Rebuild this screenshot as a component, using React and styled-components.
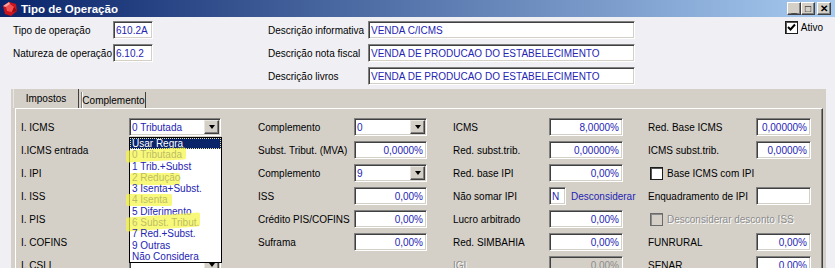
import React from "react";
import styled, { createGlobalStyle } from "styled-components";

const GlobalStyle = createGlobalStyle`
  html, body { margin: 0; padding: 0; }
  body {
    background: #f0f0f4;
    font-family: "Liberation Sans", Arial, sans-serif;
    font-size: 10px;
    color: #000;
    overflow: hidden;
  }
`;

const BLUE = "#2424b4";

const Window = styled.div`
  width: 835px;
  height: 268px;
  overflow: hidden;
  display: flex;
  flex-direction: column;
  background: #f0f0f4;
`;

const TitleBar = styled.div`
  height: 17px;
  flex: none;
  display: flex;
  align-items: center;
  padding: 0 4px 0 2px;
  background: linear-gradient(to right, #0a246a, #a6caf0);
`;

const Title = styled.div`
  color: #fff;
  font-weight: bold;
  font-size: 11.5px;
  margin-left: 3px;
  flex: 1;
`;

const Controls = styled.div`
  display: flex;
  align-items: center;
  button:last-child { margin-left: 2px; }
`;

const CtrlButton = styled.button`
  width: 14px;
  height: 13px;
  padding: 0;
  margin: 0;
  background: #d4d0c8;
  border: 1px solid;
  border-color: #fff #404040 #404040 #fff;
  box-shadow: inset -1px -1px 0 #808080;
  font: bold 10px "Liberation Sans", Arial, sans-serif;
  line-height: 9px;
  color: #000;
  display: flex;
  align-items: center;
  justify-content: center;
`;

const Header = styled.div`
  display: flex;
  padding: 4px 12px 4px 13px;
  flex: none;
`;

const FormGrid = styled.div`
  display: grid;
  grid-template-columns: ${(p) => p.$cols};
  grid-auto-rows: 18px;
  row-gap: 5px;
  margin-left: ${(p) => p.$offset || 0}px;
`;

const Label = styled.div`
  display: flex;
  align-items: center;
  white-space: nowrap;
  padding-left: ${(p) => p.$indent || 0}px;
  color: ${(p) => (p.$disabled ? "#8c8c8c" : "#000")};
  text-shadow: ${(p) => (p.$disabled ? "1px 1px 0 #fff" : "none")};
`;

const Field = styled.div`
  box-sizing: border-box;
  flex: none;
  width: ${(p) => (p.$w ? p.$w + "px" : "100%")};
  height: 18px;
  background: ${(p) => (p.$disabled ? "#d4d0c8" : "#fff")};
  border: 1px solid;
  border-color: #808080 #fff #fff #808080;
  box-shadow: inset 1px 1px 0 #404040, inset -1px -1px 0 #d4d0c8;
  color: ${(p) => (p.$disabled ? "#8c8c8c" : BLUE)};
  display: flex;
  align-items: center;
  justify-content: ${(p) => (p.$right ? "flex-end" : "flex-start")};
  padding: 0 3px 0 2px;
  white-space: nowrap;
  overflow: hidden;
`;

const Ativo = styled.div`
  margin-left: auto;
  align-self: flex-start;
  display: flex;
  align-items: center;
  gap: 3px;
  height: 13px;
`;

const Box = styled.span`
  box-sizing: border-box;
  width: 13px;
  height: 13px;
  flex: none;
  background: ${(p) => (p.$disabled ? "#d4d0c8" : "#fff")};
  border: 1px solid ${(p) => (p.$disabled ? "#6a6a6a" : "#1c1c1c")};
  box-shadow: inset 1px 1px 0 ${(p) => (p.$disabled ? "#8a8a8a" : "#555")};
  display: flex;
  align-items: center;
  justify-content: center;
`;

const CheckRow = styled.div`
  grid-column: span 2;
  display: flex;
  align-items: center;
  gap: 4px;
  padding-left: ${(p) => p.$indent || 0}px;
  color: ${(p) => (p.$disabled ? "#8c8c8c" : "#000")};
  text-shadow: ${(p) => (p.$disabled ? "1px 1px 0 #fff" : "none")};
  white-space: nowrap;
`;

const TabArea = styled.div`
  margin-left: 11px;
  width: 815px;
  flex: 1;
  background: #d4d0c8;
  display: flex;
  flex-direction: column;
`;

const TabStrip = styled.div`
  height: 19px;
  display: flex;
  align-items: flex-end;
  padding-left: 2px;
  gap: 2px;
  flex: none;
`;

const Tab = styled.div`
  box-sizing: border-box;
  width: ${(p) => p.$w}px;
  height: ${(p) => (p.$active ? 19 : 16)}px;
  display: flex;
  align-items: center;
  justify-content: center;
  background: #d4d0c8;
  border-left: 1px solid ${(p) => (p.$active ? "#e8e6e2" : "#808080")};
  border-right: 1px solid #404040;
  box-shadow: ${(p) => (p.$active ? "none" : "inset 1px 0 0 #fff")};
`;

const Panel = styled.div`
  margin-left: 4px;
  width: 808px;
  flex: 1;
  box-sizing: border-box;
  border-top: 1px solid #fff;
  border-left: 1px solid #fff;
  border-right: 1px solid #404040;
  box-shadow: inset -1px 0 0 #808080;
  padding: 9px 0 0 5px;
`;

const ComboWrap = styled.div`
  position: relative;
  width: ${(p) => (p.$w ? p.$w + "px" : "100%")};
`;

const ComboBox = styled(Field)`
  width: 100%;
  padding-right: 1px;
  justify-content: space-between;
`;

const Arrow = styled.span`
  box-sizing: border-box;
  width: 15px;
  height: 14px;
  flex: none;
  background: #d4d0c8;
  border: 1px solid;
  border-color: #e8e6e2 #404040 #404040 #e8e6e2;
  box-shadow: inset -1px -1px 0 #808080;
  display: flex;
  align-items: center;
  justify-content: center;
  &::after {
    content: "";
    border-left: 3.5px solid transparent;
    border-right: 3.5px solid transparent;
    border-top: 4px solid #000;
  }
`;

const DropList = styled.div`
  position: absolute;
  top: 19px;
  left: 0;
  width: 93px;
  height: 126px;
  box-sizing: border-box;
  background: #fff;
  border: 1px solid #000;
  z-index: 5;
  display: flex;
  flex-direction: column;
`;

const Option = styled.div`
  flex: 1;
  min-height: 0;
  line-height: 11px;
  position: relative;
  display: flex;
  align-items: center;
  padding-left: 2px;
  white-space: nowrap;
  font-size: 10px;
  color: ${(p) => (p.$selected ? "#fff" : BLUE)};
  background: ${(p) => (p.$selected ? "#0a246a" : "transparent")};
  outline: ${(p) => (p.$selected ? "1px dotted #e8e4a0" : "none")};
  outline-offset: -1px;
`;

const Marker = styled.span`
  position: absolute;
  left: ${(p) => p.$left}px;
  width: ${(p) => p.$w}px;
  top: ${(p) => p.$top || 0}px;
  height: ${(p) => p.$h || 12}px;
  background: rgba(245, 245, 70, 0.72);
  transform: skewY(${(p) => p.$skew || 0}deg);
  border-radius: 2px;
`;

const LinkText = styled.span`
  color: ${BLUE};
  margin-left: 5px;
  white-space: nowrap;
`;

const SmallRow = styled.div`
  display: flex;
  align-items: center;
`;

function TitleIcon() {
  return (
    <svg width="16" height="16" viewBox="0 0 16 16">
      <path d="M1 5 L7 1 L14 3 L15 10 L9 15 L3 13 Z" fill="#c8141c" />
      <path d="M4 6 L8 3 L12 6 L10 11 L5 10 Z" fill="#f25050" />
      <path d="M7 1 L8 3 L4 6 L1 5 Z" fill="#ffa0a0" />
      <path d="M12 6 L15 10 L10 11 Z" fill="#98080e" />
    </svg>
  );
}

function Check({ checked, disabled }) {
  return (
    <Box $disabled={disabled}>
      {checked && (
        <svg width="9" height="9" viewBox="0 0 9 9">
          <path d="M1 4 L3.5 6.5 L8 1.5" stroke="#000" strokeWidth="2" fill="none" />
        </svg>
      )}
    </Box>
  );
}

const options = [
  "Usar Regra",
  "0 Tributada",
  "1 Trib.+Subst",
  "2 Redução",
  "3 Isenta+Subst.",
  "4 Isenta",
  "5 Diferimento",
  "6 Subst. Tribut.",
  "7 Red.+Subst.",
  "9 Outras",
  "Não Considera",
];

const markers = {
  "0 Tributada": { left: -4, w: 60, skew: -3 },
  "2 Redução": { left: 0, w: 50, top: 1 },
  "4 Isenta": { left: -4, w: 46 },
  "6 Subst. Tribut.": { left: -4, w: 74, top: -2, h: 14, skew: -4 },
};

function Combo({ value, open, w }) {
  return (
    <ComboWrap $w={w}>
      <ComboBox>
        <span>{value}</span>
        <Arrow />
      </ComboBox>
      {open && (
        <DropList>
          {options.map((o, i) => (
            <Option key={o} $selected={i === 0}>
              {o}
              {markers[o] && (
                <Marker
                  $left={markers[o].left}
                  $w={markers[o].w}
                  $top={markers[o].top}
                  $h={markers[o].h}
                  $skew={markers[o].skew}
                />
              )}
            </Option>
          ))}
        </DropList>
      )}
    </ComboWrap>
  );
}

const gridCols = "108px 92px 133px 73px 122px 74px 133px 55px";

export default function App() {
  return (
    <Window>
      <GlobalStyle />
      <TitleBar>
        <TitleIcon />
        <Title>Tipo de Operação</Title>
        <Controls>
          <CtrlButton>_</CtrlButton>
          <CtrlButton>□</CtrlButton>
          <CtrlButton>✕</CtrlButton>
        </Controls>
      </TitleBar>

      <Header>
        <FormGrid $cols="100px 40px">
          <Label>Tipo de operação</Label>
          <Field>610.2A</Field>
          <Label>Natureza de operação</Label>
          <Field>6.10.2</Field>
        </FormGrid>
        <FormGrid $cols="100px 267px" $offset={115}>
          <Label>Descrição informativa</Label>
          <Field>VENDA C/ICMS</Field>
          <Label>Descrição nota fiscal</Label>
          <Field>VENDA DE PRODUCAO DO ESTABELECIMENTO</Field>
          <Label>Descrição livros</Label>
          <Field>VENDA DE PRODUCAO DO ESTABELECIMENTO</Field>
        </FormGrid>
        <Ativo>
          <Check checked />
          <span>Ativo</span>
        </Ativo>
      </Header>

      <TabArea>
        <TabStrip>
          <Tab $active $w={66}>Impostos</Tab>
          <Tab $w={65}>Complemento</Tab>
        </TabStrip>
        <Panel>
          <FormGrid $cols={gridCols}>
            <Label>I. ICMS</Label>
            <Combo value="0 Tributada" open />
            <Label $indent={37}>Complemento</Label>
            <Combo value="0" />
            <Label $indent={26}>ICMS</Label>
            <Field $right>8,0000%</Field>
            <Label $indent={25}>Red. Base ICMS</Label>
            <Field $right>0,00000%</Field>

            <Label>I.ICMS entrada</Label>
            <Combo value="" />
            <Label $indent={37}>Subst. Tribut. (MVA)</Label>
            <Field $right>0,0000%</Field>
            <Label $indent={26}>Red. subst.trib.</Label>
            <Field $right>0,00000%</Field>
            <Label $indent={25}>ICMS subst.trib.</Label>
            <Field $right>0,0000%</Field>

            <Label>I. IPI</Label>
            <Combo value="" />
            <Label $indent={37}>Complemento</Label>
            <Combo value="9" />
            <Label $indent={26}>Red. base IPI</Label>
            <Field $right>0,00%</Field>
            <CheckRow $indent={27}>
              <Check />
              <span>Base ICMS com IPI</span>
            </CheckRow>

            <Label>I. ISS</Label>
            <Combo value="" />
            <Label $indent={37}>ISS</Label>
            <Field $right>0,00%</Field>
            <Label $indent={26}>Não somar IPI</Label>
            <SmallRow>
              <Field $w={17}>N</Field>
              <LinkText>Desconsiderar</LinkText>
            </SmallRow>
            <Label $indent={25}>Enquadramento de IPI</Label>
            <Field />

            <Label>I. PIS</Label>
            <Combo value="" />
            <Label $indent={37}>Crédito PIS/COFINS</Label>
            <Field $right>0,00%</Field>
            <Label $indent={26}>Lucro arbitrado</Label>
            <Field $right>0,00%</Field>
            <CheckRow $indent={27} $disabled>
              <Check disabled />
              <span>Desconsiderar desconto ISS</span>
            </CheckRow>

            <Label>I. COFINS</Label>
            <Combo value="" />
            <Label $indent={37}>Suframa</Label>
            <Field $right>0,00%</Field>
            <Label $indent={26}>Red. SIMBAHIA</Label>
            <Field $right>0,00%</Field>
            <Label $indent={25}>FUNRURAL</Label>
            <Field $right>0,00%</Field>

            <Label>I. CSLL</Label>
            <Combo value="" />
            <span />
            <span />
            <Label $indent={26} $disabled>IGI</Label>
            <Field $right $disabled>0,00%</Field>
            <Label $indent={25}>SENAR</Label>
            <Field $right>0,00%</Field>
          </FormGrid>
        </Panel>
      </TabArea>
    </Window>
  );
}
